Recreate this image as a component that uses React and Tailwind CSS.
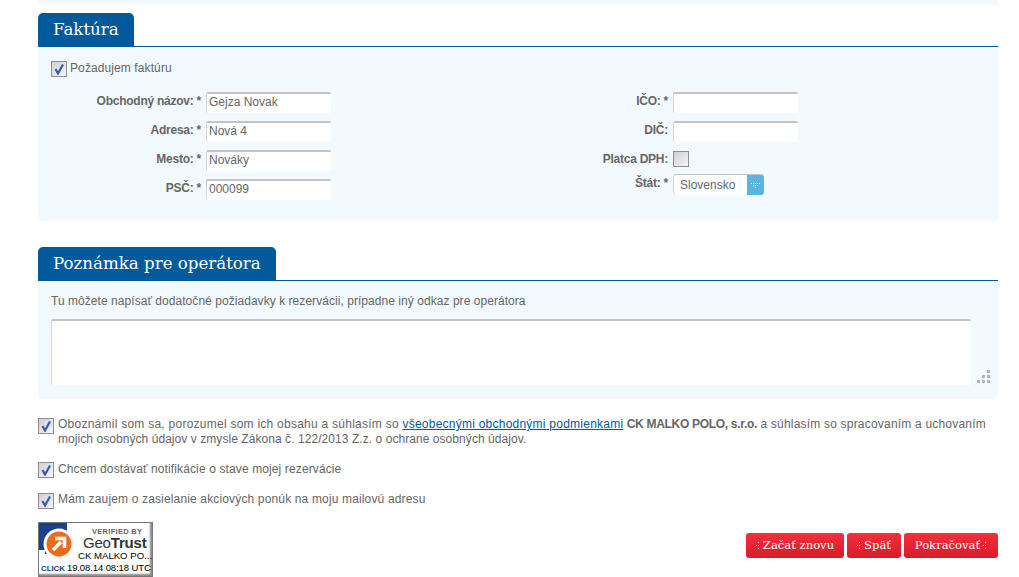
import React from 'react';

const Check = ({ checked = true, className = '' }) => (
  <span className={`inline-flex shrink-0 w-[16px] h-[16px] items-center justify-center border border-[#8f8f8f] bg-gradient-to-br from-[#cfcfd6] to-[#f6f6f8] ${className}`}>
    {checked && (
      <svg width="12" height="12" viewBox="0 0 12 12">
        <path d="M2.5 6 L5 10.5 L10 1.5" fill="none" stroke="#3c5aa8" strokeWidth="2.2" />
      </svg>
    )}
  </span>
);

const Field = ({ value = '' }) => (
  <div className="w-[125px] h-[21px] bg-white border-t-2 border-l border-t-[#c4c4c4] border-l-[#d4d4d4] rounded-[2px] pl-[2px] text-[12px] leading-[17px] text-[#666]">
    {value}
  </div>
);

const Row = ({ label, children, className = '', labelClass = 'pb-[4px]' }) => (
  <div className={`flex items-center h-[21px] ${className}`}>
    <div className={`flex-1 text-right font-bold text-[12px] text-[#666] whitespace-nowrap tracking-[-0.25px] ${labelClass}`}>{label}</div>
    <div className="flex ml-[5px] w-[125px] shrink-0">{children}</div>
  </div>
);

const SectionHead = ({ title }) => (
  <div className="border-b border-[#005a9c] h-[34px] flex items-end">
    <h2 className="h-[33px] bg-[#005a9c] rounded-t-[5px] px-[15px] text-white font-['DejaVu_Serif',serif] text-[16.65px] leading-[33px]">
      {title}
    </h2>
  </div>
);

const Dots = () => (
  <svg width="4" height="7" viewBox="0 0 4 7" className="shrink-0">
    <g fill="#fff" fillOpacity="0.75">
      <rect x="2" y="0" width="1" height="1" />
      <rect x="0" y="3" width="1" height="1" />
      <rect x="2" y="3" width="1" height="1" />
      <rect x="2" y="6" width="1" height="1" />
    </g>
  </svg>
);

const RedButton = ({ children, dots, width }) => (
  <button className={`h-[25px] rounded-[3px] bg-gradient-to-b from-[#f22f3e] to-[#da1a26] text-white font-['DejaVu_Serif',serif] text-[11.6px] flex items-center justify-center gap-[3px] ${width}`}>
    {dots === 'left' && <Dots />}
    <span>{children}</span>
    {dots === 'right' && <Dots />}
  </button>
);

const GeoTrust = () => (
  <div className="relative w-[115px] h-[55px] bg-white border border-[#777] shadow-[inset_-2px_-2px_2px_#888] overflow-hidden font-['Liberation_Sans',sans-serif] text-black">
    <svg width="40" height="36" viewBox="0 0 40 36" className="absolute left-0 top-0">
      <rect x="0" y="0" width="28" height="31" fill="#1c3f8f" />
      <circle cx="20" cy="21" r="15.5" fill="#fff" />
      <rect x="0" y="27" width="6" height="9" fill="#fff" />
      <circle cx="20" cy="21" r="12.5" fill="#ee6a1c" />
      <path d="M14 27 L22 19 M16 15.5 H25.5 V25" fill="none" stroke="#fff" strokeWidth="3.6" />
    </svg>
    <div className="absolute left-[53px] top-[5px] text-[7.5px] font-bold leading-[8px] text-[#666] tracking-[0.3px] whitespace-nowrap">VERIFIED BY</div>
    <div className="absolute left-[44px] top-[11px] text-[15px] leading-[17px] tracking-[-0.2px] text-[#333] whitespace-nowrap">Geo<span className="font-bold">Trust</span></div>
    <div className="absolute left-[39px] top-[27px] text-[9.6px] leading-[12px] whitespace-nowrap">CK MALKO PO...</div>
    <div className="absolute left-[2px] top-[39px] text-[9.5px] leading-[12px] whitespace-nowrap tracking-[-0.1px]">
      <span className="text-[8px] font-bold text-[#1c3f8f] mr-[2px]">CLICK</span>19.08.14 08:18 UTC
    </div>
  </div>
);

const Resize = () => (
  <svg width="14" height="14" viewBox="0 0 14 14" className="absolute right-[8px] bottom-[15px]">
    <g fill="#b4b4b4">
      <rect x="11" y="0" width="3" height="3" />
      <rect x="6" y="5" width="3" height="3" />
      <rect x="11" y="5" width="3" height="3" />
      <rect x="1" y="10" width="3" height="3" />
      <rect x="6" y="10" width="3" height="3" />
      <rect x="11" y="10" width="3" height="3" />
    </g>
  </svg>
);

export default function App() {
  return (
    <div className="h-[577px] overflow-hidden bg-white font-['Liberation_Sans',sans-serif] text-[12px] text-[#666]">
      <div className="mx-[38px] w-[960px]">
        <div className="h-[5px] bg-[#f3faff]" />

        <section className="mt-[8px]">
          <SectionHead title="Faktúra" />
          <div className="h-[174px] bg-[#f3faff] rounded-b-[3px] pt-[14px]">
            <div className="flex items-center pl-[13px] h-[16px]">
              <Check />
              <span className="ml-[3px] mb-[2px] leading-[14px] tracking-[0.1px]">Požadujem faktúru</span>
            </div>
            <div className="flex mt-[15px]">
              <div className="w-[293px] flex flex-col gap-[8px]">
                <Row label="Obchodný názov: *"><Field value="Gejza Novak" /></Row>
                <Row label="Adresa: *"><Field value="Nová 4" /></Row>
                <Row label="Mesto: *"><Field value="Nováky" /></Row>
                <Row label="PSČ: *"><Field value="000099" /></Row>
              </div>
              <div className="ml-[262px] w-[205px] flex flex-col">
                <Row label="IČO: *"><Field /></Row>
                <Row label="DIČ:" className="mt-[8px]"><Field /></Row>
                <Row label="Platca DPH:" className="mt-[6px]" labelClass=""><Check checked={false} /></Row>
                <Row label="Štát: *" className="mt-[5px]">
                  <div className="flex w-[91px] h-[21px] rounded-[3px] overflow-hidden bg-white border-t border-l border-t-[#c4c4c4] border-l-[#d4d4d4]">
                    <span className="flex-1 pl-[6px] leading-[20px] text-[#666]">Slovensko</span>
                    <span className="w-[17px] bg-[#55b7e2] flex items-center justify-center">
                      <svg width="9" height="5" viewBox="0 0 9 5">
                        <g fill="#fff">
                          <rect x="0" y="0" width="1" height="1" /><rect x="2" y="0" width="1" height="1" /><rect x="4" y="0" width="1" height="1" /><rect x="6" y="0" width="1" height="1" /><rect x="8" y="0" width="1" height="1" />
                          <rect x="2" y="2" width="1" height="1" /><rect x="4" y="2" width="1" height="1" /><rect x="6" y="2" width="1" height="1" />
                          <rect x="4" y="4" width="1" height="1" />
                        </g>
                      </svg>
                    </span>
                  </div>
                </Row>
              </div>
            </div>
          </div>
        </section>

        <section className="mt-[26px]">
          <SectionHead title="Poznámka pre operátora" />
          <div className="relative h-[118px] bg-[#f3faff] rounded-b-[3px] pt-[13px] px-[13px]">
            <p className="leading-[14px] tracking-[0.05px]">Tu môžete napísať dodatočné požiadavky k rezervácii, prípadne iný odkaz pre operátora</p>
            <div className="mt-[11px] w-[920px] h-[66px] bg-white border-t-2 border-l border-t-[#c4c4c4] border-l-[#d4d4d4] rounded-[2px]" />
            <Resize />
          </div>
        </section>

        <div className="mt-[18px] flex items-start">
          <Check className="mt-[1px]" />
          <p className="ml-[4px] leading-[15px] whitespace-nowrap">
            <span className="tracking-[0.25px]">Oboznámil som sa, porozumel som ich obsahu a súhlasím so </span>
            <a className="underline text-[#005a9c] tracking-[0.24px]">všeobecnými obchodnými podmienkami</a>{' '}
            <b className="tracking-[-0.3px]">CK MALKO POLO, s.r.o.</b>{' '}
            <span className="tracking-[0.2px]">a súhlasím so spracovaním a uchovaním</span>
            <br />
            <span className="tracking-[0.06px]">mojich osobných údajov v zmysle Zákona č. 122/2013 Z.z. o ochrane osobných údajov.</span>
          </p>
        </div>
        <div className="mt-[15px] flex items-center h-[16px]">
          <Check />
          <span className="ml-[4px] mb-[2px] leading-[14px] tracking-[0.12px]">Chcem dostávať notifikácie o stave mojej rezervácie</span>
        </div>
        <div className="mt-[15px] flex items-center h-[16px]">
          <Check />
          <span className="ml-[4px] mb-[4px] leading-[14px] tracking-[0.15px]">Mám zaujem o zasielanie akciových ponúk na moju mailovú adresu</span>
        </div>

        <div className="mt-[13px] flex justify-between">
          <GeoTrust />
          <div className="flex gap-[3px] mt-[11px]">
            <RedButton dots="left" width="w-[98px]">Začať znovu</RedButton>
            <RedButton dots="left" width="w-[54px]">Späť</RedButton>
            <RedButton dots="right" width="w-[94px]">Pokračovať</RedButton>
          </div>
        </div>
      </div>
    </div>
  );
}
